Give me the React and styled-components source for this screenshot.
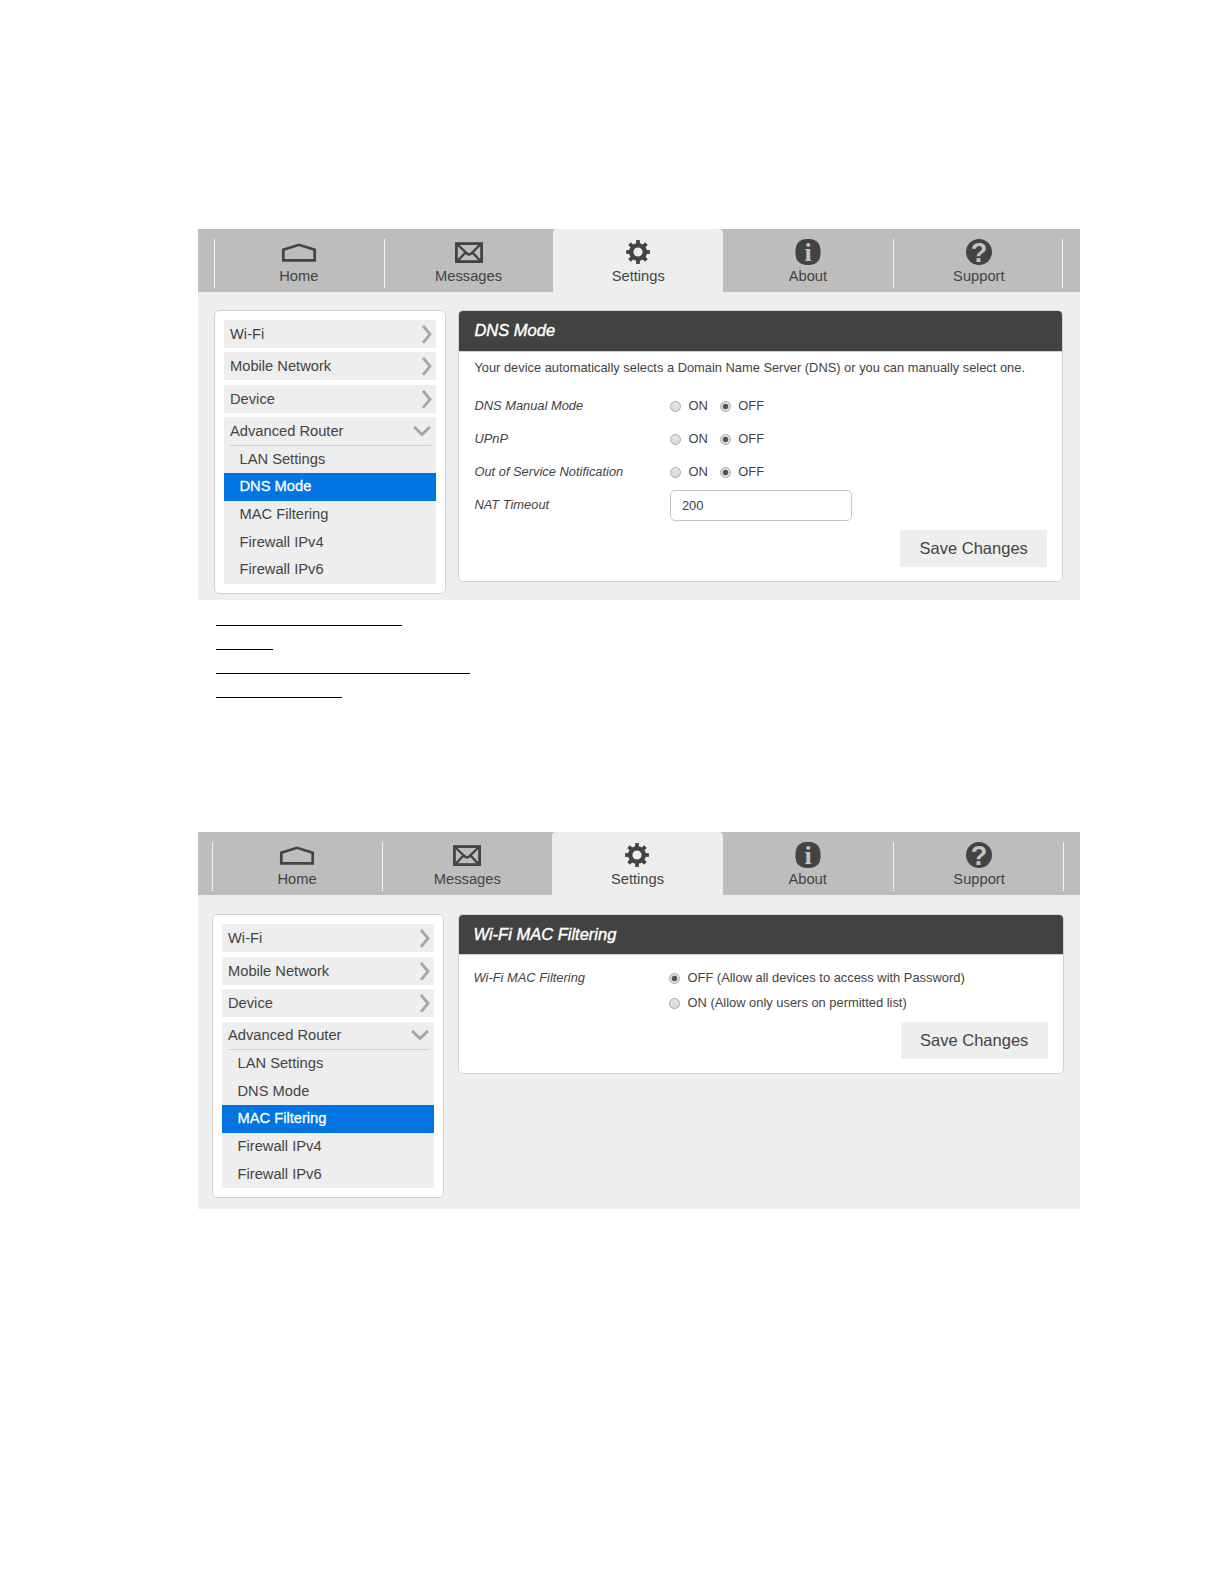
import React, {useState} from 'react';
import styled, { createGlobalStyle } from "styled-components";


const tabs = ["Home", "Messages", "Settings", "About", "Support"];
const sections = ["Wi-Fi", "Mobile Network", "Device"];
const routerLinks = ["LAN Settings", "DNS Mode", "MAC Filtering", "Firewall IPv4", "Firewall IPv6"];
const blanks = [186, 57, 254, 126];

function TabIcon({name}) {
  if (name === "Home") {
    return (
      <svg width="36" height="28" viewBox="0 0 36 28" fill="none" stroke="#434343" strokeWidth="2.7">
        <path d="M2.3 22.3V11.8L18 6.8L33.7 11.8V22.3Z" />
      </svg>
    )
  }
  if (name === "Messages") {
    return (
      <svg width="28" height="28" viewBox="0 0 28 28" fill="none" stroke="#434343">
        <rect x="1.4" y="5.6" width="25.2" height="18" strokeWidth="2.8" />
        <path d="M2.5 6.500L12 15.500Q14 17.300 16 15.500L25.500 6.500M3 22.500L10.500 14.500M25 22.500L17.500 14.500" strokeWidth="2.4" />
      </svg>
    )
  }
  if (name === "Settings") {
    return (
      <svg width="28" height="28" viewBox="-14 -14 28 28" fill="none" stroke="#434343">
        <circle r="6.8" strokeWidth="4.4" />
        {[0, 45, 90, 135, 180, 225, 270, 315].map(angle => (
          <path key={angle} d="M0 -8V-11.900" strokeWidth="3.8" transform={`rotate(${angle})`} />
        ))}
      </svg>
    )
  }
  if (name === "About") {
    return (
      <svg width="26" height="28" viewBox="0 0 26 28">
        <rect x="0.500" y="1" width="25" height="26" rx="10.500" fill="#434343" />
        <IconMark x="13" y="22.700" $serif>i</IconMark>
      </svg>
    )
  }
  return (
    <svg width="26" height="28" viewBox="0 0 26 28">
      <circle cx="13" cy="14" r="13" fill="#434343" />
      <IconMark x="13" y="23.500">?</IconMark>
    </svg>
  )
}

function Arrow({open}) {
  return (
    <svg width="18" height="20" viewBox="0 0 18 20" fill="none" stroke="#a5a5a5" strokeWidth="2.8">
      <path d={open ? "M1.200 6L9 13.500L16.800 6" : "M9 1.800L16 10.300L9 18.800"} />
    </svg>
  )
}

function Nav({edge, tabWidth}) {
  return (
    <NavBar $edge={edge}>
      {tabs.map(tab => (
        <Tab
          key={tab}
          $active={tab === "Settings"}
          $divider={tab !== "Settings" && tab !== "About"}
          $last={tab === "Support"}
          $width={tabWidth}
        >
          <TabIcon name={tab} />
          <span>{tab}</span>
        </Tab>
      ))}
    </NavBar>
  )
}

function Menu({current}) {
  return (
    <MenuCard>
      {sections.map(section => (
        <MenuItem key={section}>{section}<Arrow /></MenuItem>
      ))}
      <OpenGroup>
        <GroupTitle>Advanced Router<Arrow open /></GroupTitle>
        {routerLinks.map(link => (
          <SubItem key={link} $current={link === current}>{link}</SubItem>
        ))}
      </OpenGroup>
    </MenuCard>
  )
}

function OnOff({name}) {
  const [value, setValue] = useState("OFF");

  return (
    <Choices>
      {["ON", "OFF"].map(option => (
        <Choice key={option}>
          <Radio name={name} checked={value === option} onChange={() => setValue(option)} />
          {option}
        </Choice>
      ))}
    </Choices>
  )
}

function DnsPanel() {
  return (
    <Panel $height={271.500}>
      <PanelTitle $height={40.500}>DNS Mode</PanelTitle>
      <Intro>Your device automatically selects a Domain Name Server (DNS) or you can manually select one.</Intro>
      {["DNS Manual Mode", "UPnP", "Out of Service Notification"].map(label => (
        <Row key={label}>
          <Label>{label}</Label>
          <OnOff name={label} />
        </Row>
      ))}
      <Row>
        <Label>NAT Timeout</Label>
        <Field type="text" defaultValue="200" />
      </Row>
      <SaveButton>Save Changes</SaveButton>
    </Panel>
  )
}

function MacPanel() {
  const [value, setValue] = useState(0);
  const options = ["OFF (Allow all devices to access with Password)", "ON (Allow only users on permitted list)"];

  return (
    <Panel $height={159.600}>
      <PanelTitle $height={39.500}>Wi-Fi MAC Filtering</PanelTitle>
      <FilterRow>
        <Label $tall>Wi-Fi MAC Filtering</Label>
        <ChoiceList>
          {options.map((option, index) => (
            <Choice key={option}>
              <Radio name="filter" checked={value === index} onChange={() => setValue(index)} />
              {option}
            </Choice>
          ))}
        </ChoiceList>
      </FilterRow>
      <SaveButton>Save Changes</SaveButton>
    </Panel>
  )
}

function App() {
  return (
    <Page>
      <GlobalStyle />
      <Screen $height={371}>
        <Nav edge={16} tabWidth={169.700} />
        <Content $top={18} $left={16} $right={17} $gap={12.400}>
          <Menu current="DNS Mode" />
          <DnsPanel />
        </Content>
      </Screen>
      <Blanks>
        {blanks.map(width => <Blank key={width} $width={width} />)}
      </Blanks>
      <Screen $height={377}>
        <Nav edge={14} tabWidth={170.200} />
        <Content $top={19.400} $left={14} $right={16.500} $gap={13.500}>
          <Menu current="MAC Filtering" />
          <MacPanel />
        </Content>
      </Screen>
    </Page>
  )
}

export default App;

const GlobalStyle = createGlobalStyle`
  * {
    box-sizing: border-box;
  }
  body {
    margin: 0;
    background: #fff;
    color: #434343;
    font-family: "Liberation Sans", Arial, sans-serif;
  }
`
const Page = styled.div`
  height: 1584px;
  padding: 229px 144px 0 198px;
`
const Screen = styled.div`
  height: ${p => p.$height}px;
  background: #eee;
`
const NavBar = styled.div`
  display: flex;
  height: 63px;
  padding-left: ${p => p.$edge}px;
  background: #bdbdbd;
`
const Tab = styled.div`
  position: relative;
  display: flex;
  flex-direction: column;
  align-items: center;
  flex: none;
  width: ${p => p.$width}px;
  padding: 9px 0 0 ${p => p.$last ? 2.5 : 0}px;
  font-size: 14.7px;
  line-height: 18px;
  background: ${p => p.$active ? "#eee" : "transparent"};
  border-radius: ${p => p.$active ? "4px 4px 0 0" : "0"};

  span {
    margin-top: 1px;
  }

  &::before, &::after {
    content: "";
    position: absolute;
    top: 10px;
    height: 49px;
    width: 1px;
    background: #f3f3f3;
  }
  &::before {
    left: 0;
    display: ${p => p.$divider ? "block" : "none"};
  }
  &::after {
    right: -1px;
    display: ${p => p.$last ? "block" : "none"};
  }
`
const IconMark = styled.text`
  fill: #c4c4c4;
  font-family: ${p => p.$serif ? '"Liberation Serif", serif' : '"Liberation Sans", sans-serif'};
  font-size: ${p => p.$serif ? 26 : 27}px;
  font-weight: bold;
  text-anchor: middle;
`
const Content = styled.div`
  display: flex;
  align-items: flex-start;
  gap: ${p => p.$gap}px;
  padding: ${p => p.$top}px ${p => p.$right}px 0 ${p => p.$left}px;
`
const MenuCard = styled.div`
  display: flex;
  flex-direction: column;
  flex: none;
  gap: 4.5px;
  width: 232px;
  height: 283.5px;
  padding: 9px;
  background: #fff;
  border: 1px solid #d2d2d2;
  border-radius: 5px;
`
const MenuItem = styled.div`
  display: flex;
  align-items: center;
  justify-content: space-between;
  flex: none;
  height: 27.9px;
  padding: 0 4px 0 6px;
  font-size: 14.7px;
  background: #eee;
`
const OpenGroup = styled.div`
  background: #eee;
`
const GroupTitle = styled.div`
  display: flex;
  align-items: center;
  justify-content: space-between;
  height: 28.4px;
  margin: 0 5px 0 6px;
  font-size: 14.7px;
  border-bottom: 1px solid #cfcfcf;
`
const SubItem = styled.div`
  height: 27.7px;
  padding-left: 15.5px;
  font-size: 14.7px;
  line-height: 27.7px;
  color: ${p => p.$current ? "#fff" : "#434343"};
  background: ${p => p.$current ? "#0074e0" : "transparent"};
  -webkit-text-stroke: ${p => p.$current ? "0.3px #fff" : "0"};
`
const Panel = styled.div`
  display: flex;
  flex-direction: column;
  flex: 1;
  height: ${p => p.$height}px;
  padding-bottom: 14px;
  background: #fff;
  border: 1px solid #d2d2d2;
  border-radius: 5px;
  overflow: hidden;
`
const PanelTitle = styled.div`
  flex: none;
  height: ${p => p.$height}px;
  padding-left: 15px;
  font-size: 16.5px;
  font-style: italic;
  line-height: 38px;
  color: #fff;
  background: #424242;
  border-bottom: 1px solid #d2d2d2;
  -webkit-text-stroke: 0.4px #fff;
`
const Intro = styled.div`
  flex: none;
  height: 38px;
  padding: 7px 0 0 15px;
  font-size: 12.86px;
  line-height: 18px;
  white-space: nowrap;
`
const Row = styled.div`
  display: flex;
  flex: none;
  align-items: center;
  height: 33px;
  padding-left: 15px;
`
const FilterRow = styled(Row)`
  align-items: flex-start;
  height: 67px;
  padding-top: 11px;
`
const Label = styled.div`
  width: 195.5px;
  font-size: 12.88px;
  font-style: italic;
  line-height: ${p => p.$tall ? "24px" : "18px"};
`
const Choices = styled.div`
  display: flex;
  gap: 12px;
`
const ChoiceList = styled.div`
  display: flex;
  flex-direction: column;
`
const Choice = styled.label`
  display: flex;
  align-items: center;
  padding-bottom: 2px;
  font-size: 12.9px;
  line-height: 23px;
  white-space: nowrap;
`
const Radio = styled.input.attrs({ type: "radio" })`
  appearance: none;
  width: 11px;
  height: 11px;
  margin: 2px 7.5px 0 0;
  border: 1px solid #a8a8a8;
  border-radius: 50%;
  background: linear-gradient(#e6e6e6, #dadada);

  &:checked {
    background: radial-gradient(circle, #555 0 2.4px, #e0e0e0 3.2px);
  }
`
const Field = styled.input`
  width: 182px;
  height: 31px;
  padding: 0 11px;
  font-family: inherit;
  font-size: 12.9px;
  color: #434343;
  border: 1px solid #c4c4c4;
  border-radius: 5px;
`
const SaveButton = styled.button`
  align-self: flex-end;
  width: 147px;
  height: 37px;
  margin: auto 14.8px 0 0;
  padding: 0;
  font-family: inherit;
  font-size: 16.5px;
  color: #434343;
  background: #eee;
  border: none;
`
const Blanks = styled.div`
  display: flex;
  flex-direction: column;
  gap: 23px;
  height: 232px;
  padding: 25px 0 0 18px;
`
const Blank = styled.div`
  width: ${p => p.$width}px;
  height: 1px;
  background: #000;
`
